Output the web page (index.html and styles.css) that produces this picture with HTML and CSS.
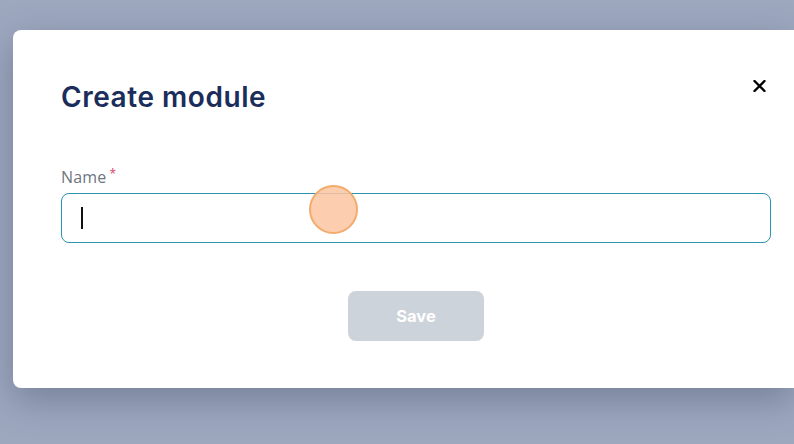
FILE: index.html
```html
<!DOCTYPE html>
<html>
<head>
<meta charset="utf-8">
<link rel="stylesheet" href="styles.css">
</head>
<body>
<div class="modal">
  <div class="header">
    <h1 class="title">Create module</h1>
    <button class="close" aria-label="Close">
      <svg width="13" height="12" viewBox="0 0 13 12"><path d="M1.5 1 L11.5 11 M11.5 1 L1.5 11" stroke="#000" stroke-width="2.4" stroke-linecap="round"/></svg>
    </button>
  </div>
  <label class="label">Name<span class="req">*</span></label>
  <div class="field">
    <div class="input"><span class="caret"></span></div>
    <span class="touch"></span>
  </div>
  <div class="actions">
    <button class="save">Save</button>
  </div>
</div>
</body>
</html>
```
FILE: styles.css
```css
html, body { margin: 0; padding: 0; }
body {
  background: #9da8bf;
  height: 444px;
  overflow: hidden;
  font-family: Inter, "Liberation Sans", sans-serif;
}
.modal {
  margin: 30px 0 0 13px;
  width: 781px;
  height: 358px;
  box-sizing: border-box;
  padding: 50px 0 45px 48px;
  background: #fff;
  border-radius: 8px 0 0 8px;
  box-shadow: 0 12px 36px rgba(45, 55, 80, 0.35);
}
.header {
  width: 710px;
  display: flex;
  justify-content: space-between;
  align-items: center;
  height: 34px;
}
.title {
  margin: 0;
  font-size: 28px;
  line-height: 34px;
  font-weight: 600;
  color: #1b2d5b;
  letter-spacing: 0.55px;
}
.close {
  width: 24px;
  height: 24px;
  padding: 0;
  border: 0;
  background: none;
  display: flex;
  align-items: center;
  justify-content: center;
  margin-top: -22px;
}
.label {
  display: block;
  margin-top: 53px;
  font-family: "Open Sans", Lato, sans-serif;
  font-size: 16px;
  letter-spacing: 0.2px;
  line-height: 20px;
  color: #6e7582;
  height: 20px;
}
.req {
  color: #e0406a;
  font-size: 12px;
  vertical-align: top;
  margin-left: 3px;
  line-height: 14px;
}
.field {
  position: relative;
  margin-top: 6px;
  width: 710px;
}
.input {
  height: 50px;
  box-sizing: border-box;
  border: 1px solid #2b93ad;
  border-radius: 8px;
  padding-left: 19px;
  display: flex;
  align-items: center;
}
.caret {
  width: 1.5px;
  height: 22px;
  background: #111;
}
.touch {
  position: absolute;
  left: 248px;
  top: -8px;
  width: 49px;
  height: 49px;
  box-sizing: border-box;
  border-radius: 50%;
  background: rgba(252, 196, 160, 0.85);
  border: 2px solid #f2ac6e;
}
.actions {
  width: 710px;
  display: flex;
  justify-content: center;
  margin-top: 48px;
}
.save {
  width: 136px;
  height: 50px;
  border: 0;
  border-radius: 8px;
  background: #cdd3da;
  color: #fff;
  font-family: Inter, "Liberation Sans", sans-serif;
  font-weight: 700;
  font-size: 16.5px;
}
```
